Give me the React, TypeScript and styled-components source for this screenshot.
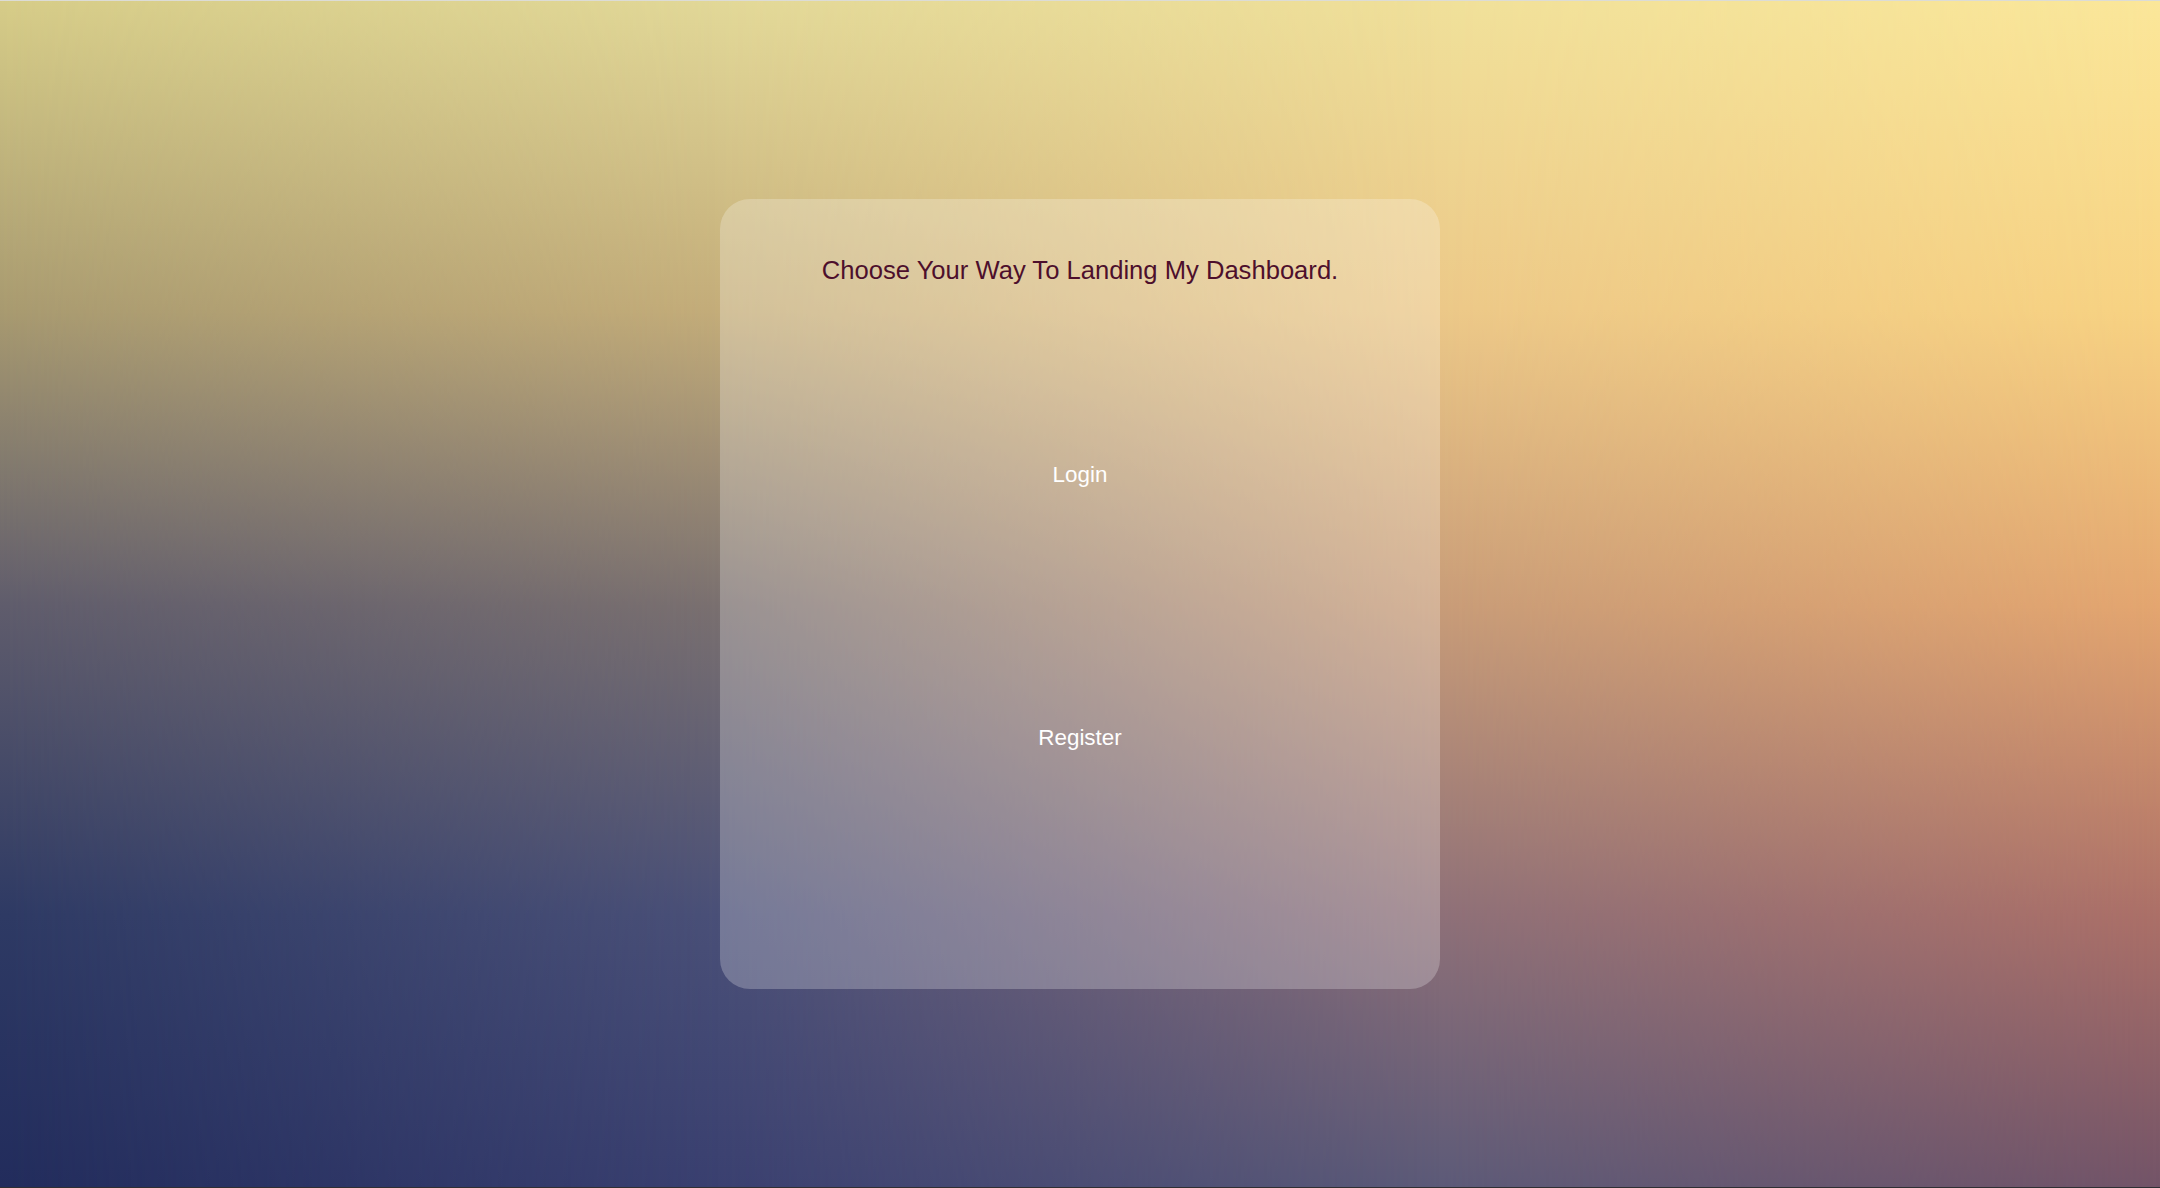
import React from "react";
import styled, { createGlobalStyle } from "styled-components";

const GlobalStyle = createGlobalStyle`
  html, body {
    margin: 0;
    padding: 0;
    height: 100%;
  }
  body {
    font-family: "Liberation Sans", Arial, sans-serif;
  }
  * {
    box-sizing: border-box;
  }
`;

/* Vertical colour columns of the sky, sampled at x = 0, 1/3, 2/3 and 1 */
const columnFar = `linear-gradient(to bottom, #fbe79a 0%, #f8d383 26%, #e4a670 51%, #ac7068 77%, #735468 100%)`;
const columnRight = `linear-gradient(to bottom, #f0e09a 0%, #ecc888 26%, #c89c78 51%, #8e7078 77%, #5c5a78 100%)`;
const columnLeft = `linear-gradient(to bottom, #e2d898 0%, #c4ad7a 26%, #7a7070 51%, #4a5078 77%, #3a4070 100%)`;
const columnEdge = `linear-gradient(to bottom, #d6cc88 0%, #a89a70 26%, #5f5c6c 51%, #2e3a64 77%, #222c5c 100%)`;

const Page = styled.main`
  position: relative;
  min-height: 100vh;
  display: flex;
  align-items: center;
  justify-content: center;
  overflow: hidden;
  border-top: 1px solid #dcdcd6;
  border-bottom: 1px solid #2f2f33;
  background: ${columnFar};

  &::before,
  &::after {
    content: "";
    position: absolute;
    inset: 0;
    pointer-events: none;
  }

  &::before {
    background: ${columnRight};
    -webkit-mask-image: linear-gradient(to right, #000 66.7%, transparent 100%);
    mask-image: linear-gradient(to right, #000 66.7%, transparent 100%);
  }

  &::after {
    background: ${columnEdge};
    -webkit-mask-image: linear-gradient(to right, #000 0%, transparent 33.3%);
    mask-image: linear-gradient(to right, #000 0%, transparent 33.3%);
  }
`;

const Sky = styled.div`
  position: absolute;
  inset: 0;
  pointer-events: none;
  background: ${columnLeft};
  -webkit-mask-image: linear-gradient(to right, #000 33.3%, transparent 66.7%);
  mask-image: linear-gradient(to right, #000 33.3%, transparent 66.7%);
`;

const Card = styled.section`
  position: relative;
  z-index: 1;
  width: 720px;
  height: 790px;
  border-radius: 30px;
  background: rgba(255, 255, 255, 0.24);
  padding-top: 57px;
  display: flex;
  flex-direction: column;
  align-items: center;
`;

const Title = styled.h1`
  margin: 0;
  font-family: "Liberation Sans", Arial, sans-serif;
  font-size: 25.6px;
  font-weight: 400;
  line-height: normal;
  color: #4d0f2c;
`;

const ButtonGroup = styled.div`
  margin-top: 58px;
  width: 100%;
  display: flex;
  flex-direction: column;
`;

const ChoiceButton = styled.button`
  height: 263px;
  width: 100%;
  border: none;
  background: transparent;
  color: #ffffff;
  font-family: "Liberation Sans", Arial, sans-serif;
  font-size: 22.4px;
  line-height: normal;
  cursor: pointer;
  padding: 0;
`;

export default function App() {
  return (
    <>
      <GlobalStyle />
      <Page>
        <Sky />
        <Card>
          <Title>Choose Your Way To Landing My Dashboard.</Title>
          <ButtonGroup>
            <ChoiceButton type="button">Login</ChoiceButton>
            <ChoiceButton type="button">Register</ChoiceButton>
          </ButtonGroup>
        </Card>
      </Page>
    </>
  );
}
